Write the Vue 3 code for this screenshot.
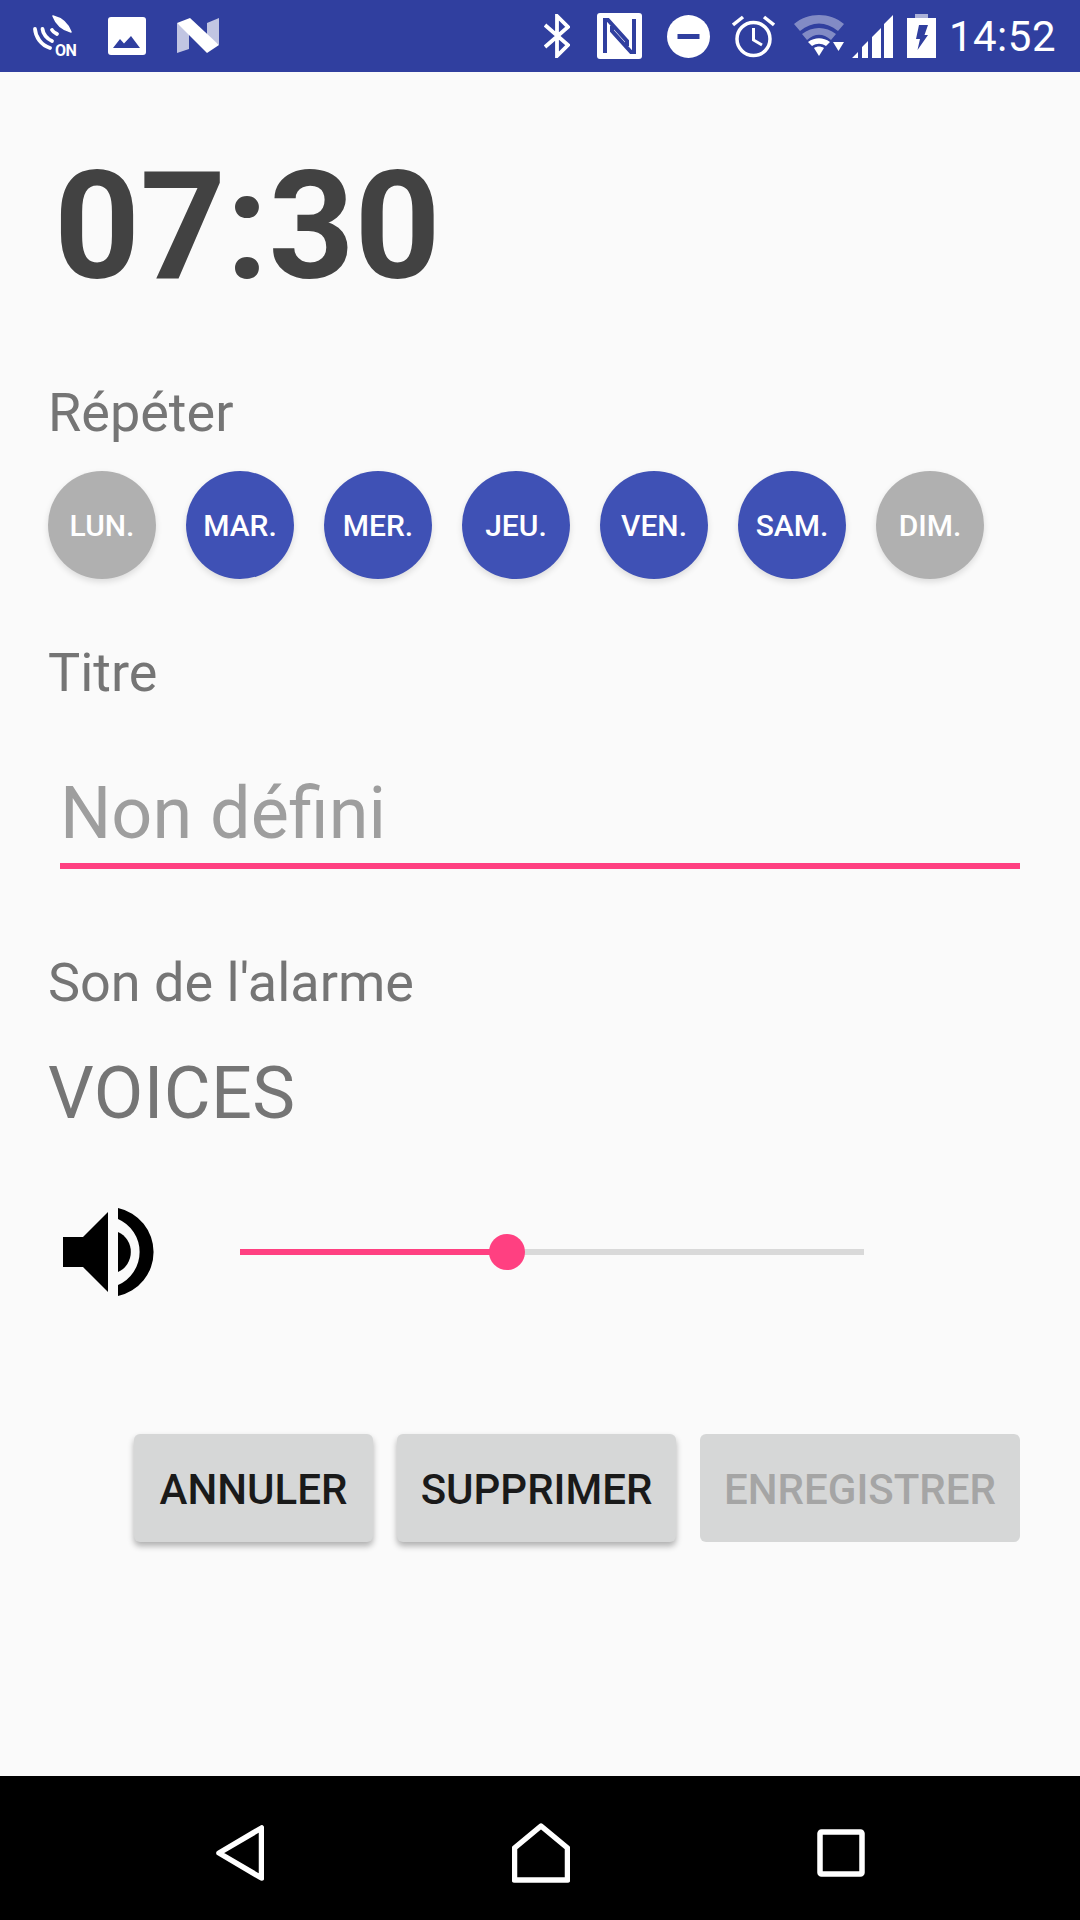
<template>
  <div class="screen">
    <header class="status-bar">
      <div class="status-left">
        <svg class="ic ic-on" width="46" height="46" viewBox="0 0 46 46">
          <path d="M20 1 C28 3 35 9 38 17 C30 15 23 9 20 1z" fill="#fff" stroke="#fff" stroke-width="1.500" stroke-linejoin="round" />
          <path d="M2 14 C2.500 22 8 30 17 33" fill="none" stroke="#fff" stroke-width="3.800" stroke-linecap="round" />
          <path d="M9.500 14 C10 19 14 24 19 26" fill="none" stroke="#fff" stroke-width="3.800" stroke-linecap="round" />
          <path d="M19 15 C20 17 22 18 24 19" fill="none" stroke="#fff" stroke-width="3.800" stroke-linecap="round" />
          <text x="22" y="41" class="on-text">ON</text>
        </svg>
        <svg class="ic" width="38" height="38" viewBox="0 0 38 38">
          <path d="M3 0h32a3 3 0 0 1 3 3v32a3 3 0 0 1-3 3H3a3 3 0 0 1-3-3V3a3 3 0 0 1 3-3z" fill="#fff" />
          <path d="M5 31 L12 22 L16 26.500 L23 19 L32 31z" fill="#303f9f" />
        </svg>
        <svg class="ic" width="43" height="36" viewBox="0 0 43 36">
          <path d="M0 5 L12 14 V31 L0 35z" fill="#fff" fill-opacity=".7" />
          <path d="M42 0 V27 L30 18 V5z" fill="#fff" fill-opacity=".7" />
          <path d="M0 5 L13 0 L42 27 L30 35z" fill="#fff" />
        </svg>
      </div>
      <div class="status-right">
        <svg class="ic bt" width="26" height="44" viewBox="0 0 26 44">
          <path d="M1 11 L24 31 L13 42 V2 L24 13 L1 33" fill="none" stroke="#fff" stroke-width="3.800" />
        </svg>
        <svg class="ic nfc" width="45" height="46" viewBox="0 0 45 46">
          <path d="M3 0h39a3 3 0 0 1 3 3v40a3 3 0 0 1-3 3H3a3 3 0 0 1-3-3V3a3 3 0 0 1 3-3z" fill="#fff" />
          <path d="M8 40 V7 H11 L30 28 V33" fill="none" stroke="#303f9f" stroke-width="4" />
          <path d="M37 6 V39 H34 L15 18 V13" fill="none" stroke="#303f9f" stroke-width="4" />
        </svg>
        <svg class="ic dnd" width="43" height="43" viewBox="0 0 43 43">
          <circle cx="21.500" cy="21.500" r="21.500" fill="#fff" />
          <rect x="10.500" y="19" width="22" height="5" fill="#303f9f" />
        </svg>
        <svg class="ic alarm" width="43" height="43" viewBox="0 0 43 43">
          <circle cx="21.500" cy="24" r="16.500" fill="none" stroke="#fff" stroke-width="3.500" />
          <path d="M21.500 13 V25 L30 30" fill="none" stroke="#fff" stroke-width="3" />
          <path d="M1 10 L11 2" stroke="#fff" stroke-width="3.500" />
          <path d="M42 10 L32 2" stroke="#fff" stroke-width="3.500" />
        </svg>
        <svg class="ic wifi" width="51" height="43" viewBox="0 0 51 43">
          <path d="M0 9 C14 -3 36 -3 50 9 L44 16 C32 6 18 6 6 16z" fill="#fff" fill-opacity=".4" />
          <path d="M8 19 C18 11 32 11 42 19 L37 25 C29 18 21 18 13 25z" fill="#fff" fill-opacity=".4" />
          <path d="M14 27 C21 22 29 22 36 27 L32 31 C27 28 23 28 18 31z" fill="#fff" />
          <path d="M20 33 C23 31 27 31 30 33 L25 41z" fill="#fff" />
          <path d="M39 27 H50 L44.500 36z" fill="#fff" />
        </svg>
        <svg class="ic signal" width="42" height="43" viewBox="0 0 42 43">
          <path d="M1 43 L7 37 V43z M11 43 V32 L17 26 V43z M21 43 V22 L30 13 V43z M33 43 V9 L42 0 V43z" fill="#fff" />
        </svg>
        <svg class="ic batt" width="29" height="44" viewBox="0 0 29 44">
          <path d="M8 0h13v4H8z" fill="#fff" fill-opacity=".6" />
          <path d="M0 4h29v40H0z" fill="#fff" />
          <path d="M12 11 H21 L17.500 21 H21 L10.500 36 L13 25 H9z" fill="#303f9f" />
        </svg>
        <span class="clock">14:52</span>
      </div>
    </header>

    <main class="content">
      <div class="time">07:30</div>

      <div class="label repeat-label">Répéter</div>
      <div class="days">
        <div
          v-for="day in days"
          :key="day.name"
          :class="['day', { 'day--on': day.on }]"
        >
          {{ day.name }}
        </div>
      </div>

      <div class="label title-label">Titre</div>
      <div class="field">Non défini</div>

      <div class="label sound-label">Son de l'alarme</div>
      <div class="sound-name">VOICES</div>

      <div class="volume">
        <svg class="speaker" width="95" height="96" viewBox="0 0 95 96">
          <path d="M3 33 H23 L48 8 V88 L23 63 H3z" fill="#000" />
          <path d="M58 28 A22 22 0 0 1 58 68z" fill="#000" />
          <path d="M58 4 A45 45 0 0 1 58 92 V81 A36 36 0 0 0 58 15z" fill="#000" />
        </svg>
        <div class="slider">
          <div class="slider-fill" :style="{ width: volume + '%' }"></div>
          <div class="slider-thumb"></div>
        </div>
      </div>

      <div class="actions">
        <button class="btn btn--cancel">ANNULER</button>
        <button class="btn btn--delete">SUPPRIMER</button>
        <button class="btn btn--save">ENREGISTRER</button>
      </div>
    </main>

    <footer class="nav-bar">
      <svg width="48" height="56" viewBox="0 0 48 56">
        <path d="M45.500 3 V53 L3 28z" fill="none" stroke="#fff" stroke-width="5.500" stroke-linejoin="round" />
      </svg>
      <svg width="58" height="60" viewBox="0 0 58 60">
        <path d="M29 3 L55.500 25 V57 H2.500 V25z" fill="none" stroke="#fff" stroke-width="5.500" stroke-linejoin="round" />
      </svg>
      <svg width="48" height="48" viewBox="0 0 48 48">
        <rect x="3" y="3" width="42" height="42" rx="1.500" fill="none" stroke="#fff" stroke-width="5.500" stroke-linejoin="round" />
      </svg>
    </footer>
  </div>
</template>

<script setup>
const days = [
  { name: 'LUN.', on: false },
  { name: 'MAR.', on: true },
  { name: 'MER.', on: true },
  { name: 'JEU.', on: true },
  { name: 'VEN.', on: true },
  { name: 'SAM.', on: true },
  { name: 'DIM.', on: false },
]

const volume = 42.7
</script>

<style>
html,
body {
  margin: 0;
  background: #fafafa;
}
</style>

<style scoped>
.screen {
  width: 1080px;
  height: 1920px;
  display: flex;
  flex-direction: column;
  background: #fafafa;
  font-family: Roboto, sans-serif;
  overflow: hidden;
}

.status-bar {
  height: 72px;
  flex: none;
  display: flex;
  justify-content: space-between;
  align-items: center;
  background: #303f9f;
  padding: 0 24px 0 33px;
}

.status-left,
.status-right {
  display: flex;
  align-items: center;
}

.status-left {
  gap: 31px;
}

.ic {
  display: block;
  flex: none;
}

.ic-on {
  margin: 3px -2px 0 0;
}

.on-text {
  font-family: Roboto, sans-serif;
  font-size: 16px;
  font-weight: 700;
  letter-spacing: -0.5px;
  fill: #fff;
}

.bt {
  margin-right: 27px;
}

.nfc {
  margin-right: 25px;
}

.dnd {
  margin-right: 22px;
}

.alarm {
  margin-right: 19px;
}

.wifi {
  margin-right: 6px;
}

.signal {
  margin-right: 14px;
}

.batt {
  margin-right: 13px;
}

.clock {
  font-size: 42px;
  color: #fff;
  letter-spacing: 0.5px;
}

.content {
  flex: 1;
  display: flex;
  flex-direction: column;
  padding: 0 60px 0 48px;
}

.time {
  margin: 80px 0 0 6px;
  font-size: 150px;
  line-height: 150px;
  font-weight: 700;
  color: #424242;
}

.label {
  font-size: 54px;
  line-height: 60px;
  color: #757575;
}

.repeat-label {
  margin-top: 81px;
}

.days {
  display: flex;
  gap: 30px;
  margin-top: 28px;
}

.day {
  width: 108px;
  height: 108px;
  flex: none;
  border-radius: 50%;
  display: flex;
  align-items: center;
  justify-content: center;
  background: #b0b0b0;
  color: #fff;
  font-size: 30px;
  font-weight: 500;
  box-shadow: 0 3px 6px rgba(0, 0, 0, 0.12);
}

.day--on {
  background: #3f51b5;
}

.title-label {
  margin-top: 64px;
}

.field {
  margin: 69px 0 0 12px;
  padding-bottom: 7px;
  font-size: 72px;
  line-height: 84px;
  color: #9e9e9e;
  border-bottom: 6px solid #ff4081;
}

.sound-label {
  margin-top: 84px;
}

.sound-name {
  margin-top: 39px;
  font-size: 72px;
  line-height: 84px;
  letter-spacing: 0.4px;
  color: #757575;
}

.volume {
  display: flex;
  align-items: center;
  margin-top: 68px;
  padding-left: 12px;
}

.slider {
  position: relative;
  width: 624px;
  height: 6px;
  margin-left: 85px;
  background: #d9d9d9;
}

.slider-fill {
  height: 100%;
  background: #ff4081;
}

.slider-thumb {
  position: absolute;
  left: 249px;
  top: -15px;
  width: 36px;
  height: 36px;
  border-radius: 50%;
  background: #ff4081;
}

.actions {
  display: flex;
  justify-content: flex-end;
  gap: 24px;
  margin-top: 134px;
}

.btn {
  height: 108px;
  padding: 2px 0 0;
  border: none;
  border-radius: 6px;
  background: #d6d7d7;
  color: #1a1a1a;
  font-family: Roboto, sans-serif;
  font-size: 42px;
  font-weight: 500;
  box-shadow: 0 4px 6px rgba(0, 0, 0, 0.3);
}

.btn--cancel {
  width: 239px;
}

.btn--delete {
  width: 279px;
}

.btn--save {
  width: 320px;
  color: #a5a5a5;
  box-shadow: none;
}

.nav-bar {
  height: 144px;
  box-sizing: border-box;
  flex: none;
  display: flex;
  align-items: center;
  background: #000;
  justify-content: space-between;
  padding: 9px 215px 0 216px;
}
</style>
